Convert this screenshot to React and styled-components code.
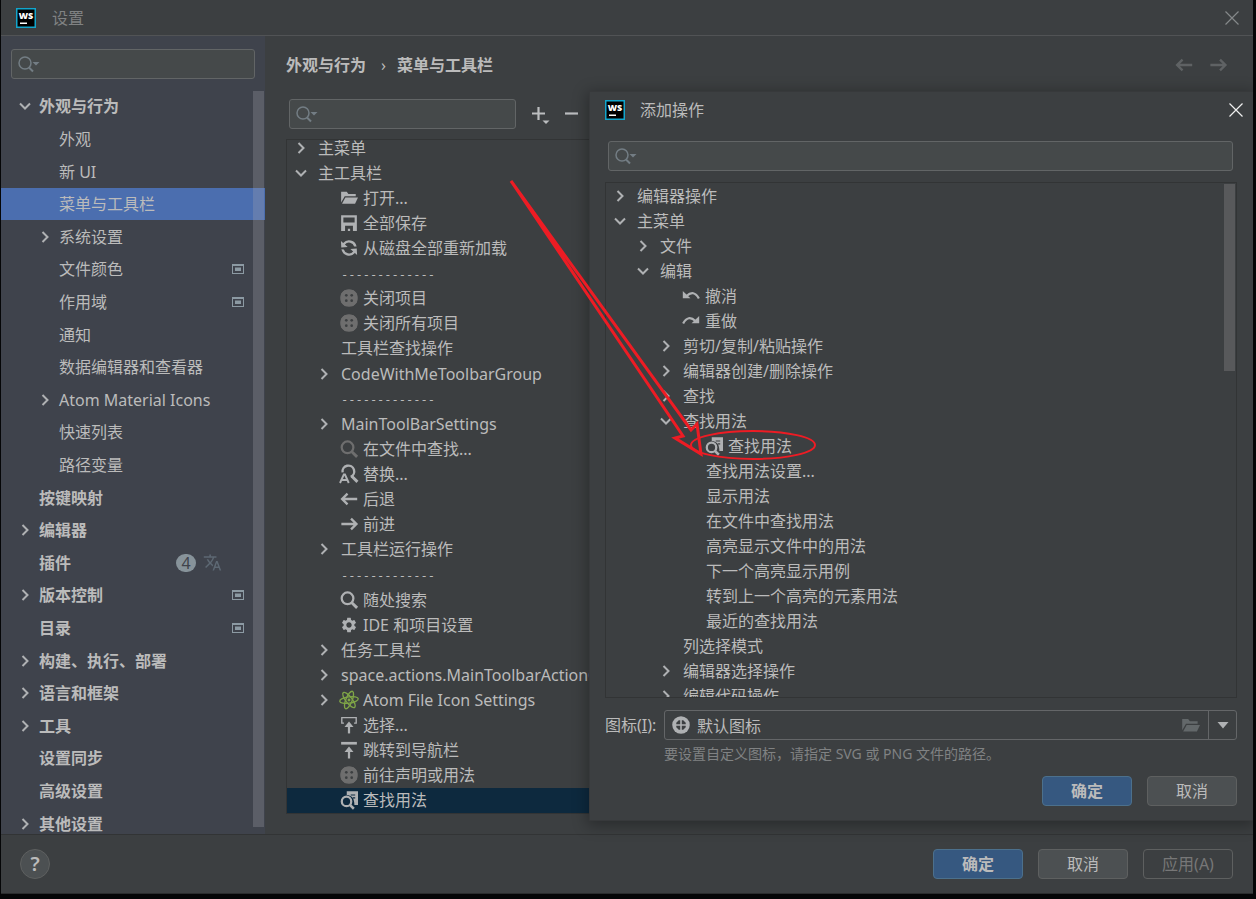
import styled, { createGlobalStyle } from 'styled-components';
import { MdSettings, MdTranslate } from 'react-icons/md';

const categories = [
    { label: '外观与行为', bold: true, arrow: 'down' },
    { label: '外观', level: 1 },
    { label: '新 UI', level: 1 },
    { label: '菜单与工具栏', level: 1, selected: true },
    { label: '系统设置', level: 1, arrow: 'right' },
    { label: '文件颜色', level: 1, project: true },
    { label: '作用域', level: 1, project: true },
    { label: '通知', level: 1 },
    { label: '数据编辑器和查看器', level: 1 },
    { label: 'Atom Material Icons', level: 1, arrow: 'right' },
    { label: '快速列表', level: 1 },
    { label: '路径变量', level: 1 },
    { label: '按键映射', bold: true },
    { label: '编辑器', bold: true, arrow: 'right' },
    { label: '插件', bold: true, updates: 4 },
    { label: '版本控制', bold: true, arrow: 'right', project: true },
    { label: '目录', bold: true, project: true },
    { label: '构建、执行、部署', bold: true, arrow: 'right' },
    { label: '语言和框架', bold: true, arrow: 'right' },
    { label: '工具', bold: true, arrow: 'right' },
    { label: '设置同步', bold: true },
    { label: '高级设置', bold: true },
    { label: '其他设置', bold: true, arrow: 'right' },
];

const separator = { label: '-------------', level: 1, separator: true };

const toolbarTree = [
    { label: '主菜单', arrow: 'right' },
    { label: '主工具栏', arrow: 'down' },
    { label: '打开...', level: 1, icon: 'open' },
    { label: '全部保存', level: 1, icon: 'save' },
    { label: '从磁盘全部重新加载', level: 1, icon: 'refresh' },
    separator,
    { label: '关闭项目', level: 1, icon: 'blank' },
    { label: '关闭所有项目', level: 1, icon: 'blank' },
    { label: '工具栏查找操作', level: 1 },
    { label: 'CodeWithMeToolbarGroup', level: 1, arrow: 'right' },
    separator,
    { label: 'MainToolBarSettings', level: 1, arrow: 'right' },
    { label: '在文件中查找...', level: 1, icon: 'findDim' },
    { label: '替换...', level: 1, icon: 'replace' },
    { label: '后退', level: 1, icon: 'back' },
    { label: '前进', level: 1, icon: 'forward' },
    { label: '工具栏运行操作', level: 1, arrow: 'right' },
    separator,
    { label: '随处搜索', level: 1, icon: 'find' },
    { label: 'IDE 和项目设置', level: 1, icon: 'gear' },
    { label: '任务工具栏', level: 1, arrow: 'right' },
    { label: 'space.actions.MainToolbarActionGroup', level: 1, arrow: 'right' },
    { label: 'Atom File Icon Settings', level: 1, arrow: 'right', icon: 'atom' },
    { label: '选择...', level: 1, icon: 'select' },
    { label: '跳转到导航栏', level: 1, icon: 'navBar' },
    { label: '前往声明或用法', level: 1, icon: 'blank' },
    { label: '查找用法', level: 1, icon: 'usages', selected: true },
];

const actionTree = [
    { label: '编辑器操作', arrow: 'right' },
    { label: '主菜单', arrow: 'down' },
    { label: '文件', level: 1, arrow: 'right' },
    { label: '编辑', level: 1, arrow: 'down' },
    { label: '撤消', level: 2, icon: 'undo' },
    { label: '重做', level: 2, icon: 'redo' },
    { label: '剪切/复制/粘贴操作', level: 2, arrow: 'right' },
    { label: '编辑器创建/删除操作', level: 2, arrow: 'right' },
    { label: '查找', level: 2, arrow: 'right' },
    { label: '查找用法', level: 2, arrow: 'down' },
    { label: '查找用法', level: 3, icon: 'usages' },
    { label: '查找用法设置...', level: 3 },
    { label: '显示用法', level: 3 },
    { label: '在文件中查找用法', level: 3 },
    { label: '高亮显示文件中的用法', level: 3 },
    { label: '下一个高亮显示用例', level: 3 },
    { label: '转到上一个高亮的元素用法', level: 3 },
    { label: '最近的查找用法', level: 3 },
    { label: '列选择模式', level: 2 },
    { label: '编辑器选择操作', level: 2, arrow: 'right' },
    { label: '编辑代码操作', level: 2, arrow: 'right' },
];

const glyphs = {
    open: (
        <g fill="currentColor">
            <path d="M1 2.5h5l1.5 2H14v2H4.2L1 12z" />
            <path d="M4.8 7.5H16l-2.6 5.5H1.8z" />
        </g>
    ),
    save: <path fill="currentColor" fillRule="evenodd" d="M1 1h14v14H1zM3 3v4.5h10V3zM4.5 10.5V15H7v-2h2v2h2.5v-4.5z" />,
    refresh: (
        <path
            fill="currentColor"
            d="M12.57 11.89A6 6 0 0 1 2.09 9.04l1.86.07a4.2 4.2 0 0 0 7.28 1.57L9.05 8.71l4.99-.26.26 4.99zM3.43 4.12a6 6 0 0 1 10.46 2.73l-1.87-.06a4.2 4.2 0 0 0-7.25-1.47l2.18 1.97-4.99.26L1.7 2.56z"
            transform="translate(-1.1 -1.1) scale(1.14)"
        />
    ),
    blank: (
        <g>
            <path fill="#6e6e6e" d="M8 .2C12.6.2 15.8 3.400 15.8 8S12.600 15.800 8 15.800.2 12.600.2 8 3.400.2 8 .2z" />
            <path fill="#6e6e6e" d="M4 1.200h8L14.800 4v8L12 14.800H4L1.200 12V4z" />
            <g fill="#3c3f41">
                <circle cx="5.600" cy="5.600" r="1.200" />
                <circle cx="10.400" cy="5.600" r="1.200" />
                <circle cx="5.600" cy="10.400" r="1.200" />
                <circle cx="10.400" cy="10.400" r="1.200" />
            </g>
        </g>
    ),
    defaultIcon: (
        <g>
            <circle cx="8" cy="8" r="7.8" fill="#afb1b3" />
            <path fill="#3c3f41" d="M7.300 7.300H3.800V6L6 3.800h1.300zM8.700 7.300V3.800H10L12.200 6v1.300zM7.300 8.700v3.500H6L3.800 10V8.700zM8.700 8.700h3.500V10L10 12.200H8.700z" />
        </g>
    ),
    find: (
        <g fill="none" stroke="currentColor">
            <circle cx="6.7" cy="6.5" r="5.2" strokeWidth="2" />
            <path d="M10.5 10.5L15.2 15" strokeWidth="2.6" />
        </g>
    ),
    findDim: (
        <g fill="none" stroke="#6e6e6e">
            <circle cx="6.7" cy="6.5" r="5.2" strokeWidth="2" />
            <path d="M10.5 10.5L15.2 15" strokeWidth="2.6" />
        </g>
    ),
    replace: (
        <g fill="none" stroke="currentColor" strokeWidth="2.1">
            <path d="M2.3 6.5A5.200 5.200 0 1 1 9.500 10.500" />
            <path d="M10.5 10L15.5 15" strokeWidth="2.6" />
            <path d="M0 16L3.400 8.500h1L7.800 16M1.800 13.400h4.500" strokeWidth="1.7" />
        </g>
    ),
    back: <path fill="none" stroke="currentColor" strokeWidth="2.1" d="M15.3 8H2M6.7 3.2L1.9 8l4.800 4.800" />,
    forward: <path fill="none" stroke="currentColor" strokeWidth="2.1" d="M1.200 8H14.500M9.8 3.2L14.6 8l-4.800 4.800" />,
    atom: (
        <g fill="none" stroke="#7fa547" strokeWidth="1.2">
            <ellipse cx="8" cy="8" rx="8.3" ry="2.8" transform="rotate(-8 8 8)" />
            <ellipse cx="8" cy="8" rx="8.3" ry="2.8" transform="rotate(52 8 8)" />
            <ellipse cx="8" cy="8" rx="8.3" ry="2.8" transform="rotate(112 8 8)" />
            <circle cx="8" cy="8" r=".7" fill="#7fa547" />
        </g>
    ),
    select: (
        <g fill="none" stroke="currentColor">
            <path d="M3.5 6.300H1.600V1.500h12.800V6.300H12.500" strokeWidth="1.200" />
            <path d="M8 15.500V8" strokeWidth="2" />
            <path d="M8 4.800L12 9.800H4z" fill="currentColor" stroke="none" />
        </g>
    ),
    navBar: (
        <g fill="currentColor">
            <path d="M1 .8h14v2.400H1z" />
            <path d="M8 4.800l4 5H9v5.700H7V9.800H4z" />
        </g>
    ),
    usages: (
        <g fill="none" stroke="currentColor">
            <path fill="currentColor" stroke="none" fillRule="evenodd" d="M6 .3h10v12.200h-3.200C12.800 7 11 4 6 3.600zM9.500 3h4v1h-4zM11.500 5.600h2v1h-2z" />
            <circle cx="5.800" cy="9.300" r="4.200" strokeWidth="2" />
            <path d="M8.800 12.300l3.500 3.500" strokeWidth="2.300" />
        </g>
    ),
    undo: (
        <g>
            <path fill="none" stroke="currentColor" strokeWidth="2" d="M4 8Q10.500 2 15 10.200" />
            <path fill="currentColor" d="M.7 3.500V10h6.800z" />
        </g>
    ),
    redo: (
        <g>
            <path fill="none" stroke="currentColor" strokeWidth="2" d="M12 8Q5.500 2 1 10.200" />
            <path fill="currentColor" d="M15.300 3.500V10H8.500z" />
        </g>
    ),
};

const Icon = ({ name, size = 18 }) => {
    if (name === 'gear') {
        return <MdSettings size={size} />;
    }
    return (
        <svg width={size} height={size} viewBox="0 0 16 16" aria-hidden="true" overflow="visible">
            {glyphs[name]}
        </svg>
    );
};

const Arrow = ({ direction }) => (
    <svg width="16" height="16" viewBox="0 0 16 16" aria-hidden="true">
        {direction && (
            <path
                fill="none"
                stroke="#afb1b3"
                strokeWidth="2"
                d={direction === 'down' ? 'M3 5.5L8 10.5l5-5' : 'M5.5 3L10.5 8l-5 5'}
            />
        )}
    </svg>
);

const Logo = () => (
    <svg width="20" height="20" viewBox="0 0 20 20" aria-hidden="true">
        <rect x=".75" y=".75" width="18.5" height="18.5" fill="#000" stroke="#12a5cc" strokeWidth="1.5" />
        <text x="10" y="10.5" fill="#fff" fontFamily="Open Sans, sans-serif" fontSize="9" fontWeight="800" textAnchor="middle">WS</text>
        <rect x="4" y="14.5" width="7" height="1.5" fill="#fff" />
    </svg>
);

const CloseGlyph = () => (
    <svg width="14" height="14" viewBox="0 0 14 14" aria-hidden="true">
        <path d="M.5 .5l13 13M13.5 .5l-13 13" stroke="currentColor" strokeWidth="1.2" />
    </svg>
);

const Search = ({ label }) => (
    <SearchBox>
        <svg width="22" height="18" viewBox="0 0 22 18" aria-hidden="true">
            <circle cx="7" cy="8" r="6" fill="none" stroke="#737d84" strokeWidth="1.5" />
            <path d="M11 12.5l4 4" stroke="#737d84" strokeWidth="2" />
            <path d="M14.5 7h7L18 10.5z" fill="#737d84" />
        </svg>
        <input type="text" aria-label={label} />
    </SearchBox>
);

const Tree = ({ items, stretch }) => (
    <TreeList $stretch={stretch}>
        {items.map((item, index) => (
            <TreeRow key={index} $level={item.level || 0} $selected={item.selected} $stretch={stretch}>
                <Arrow direction={item.arrow} />
                {item.icon && <IconSlot><Icon name={item.icon} /></IconSlot>}
                <TreeLabel $separator={item.separator}>{item.label}</TreeLabel>
            </TreeRow>
        ))}
    </TreeList>
);

const Sidebar = () => (
    <SidebarPanel>
        <SidebarSearch>
            <Search label="搜索设置" />
        </SidebarSearch>
        <CategoryArea>
            <CategoryList>
                {categories.map(item => (
                    <CategoryRow key={item.label} $level={item.level || 0} $bold={item.bold} $selected={item.selected}>
                        <Arrow direction={item.arrow} />
                        <CategoryName>{item.label}</CategoryName>
                        {item.updates && (
                            <Updates>
                                <Badge>{item.updates}</Badge>
                                <MdTranslate size={19} />
                            </Updates>
                        )}
                        {item.project && (
                            <svg width="12" height="10" viewBox="0 0 12 10" aria-hidden="true">
                                <path fill="#8c9aa3" fillRule="evenodd" d="M0 0h12v10H0zM1 2v7h10V2z" />
                                <path fill="#8c9aa3" d="M3 3.5h6v3.5H3z" />
                            </svg>
                        )}
                    </CategoryRow>
                ))}
            </CategoryList>
            <SidebarScrollbar />
        </CategoryArea>
    </SidebarPanel>
);

const AddActionDialog = () => (
    <Dialog role="dialog" aria-label="添加操作">
        <DialogTitle>
            <Logo />
            <span>添加操作</span>
            <IconButton aria-label="关闭" $color="#f0f0f0"><CloseGlyph /></IconButton>
        </DialogTitle>
        <DialogSearch>
            <Search label="搜索操作" />
        </DialogSearch>
        <DialogTree>
            <Tree items={actionTree} />
            <DialogScrollbar />
        </DialogTree>
        <IconField>
            <label htmlFor="icon-path">图标(<u>I</u>):</label>
            <Combo>
                <Icon name="defaultIcon" />
                <input id="icon-path" type="text" defaultValue="默认图标" />
                <IconButton aria-label="浏览" $color="#63686a"><Icon name="open" size={19} /></IconButton>
                <ComboToggle aria-label="展开">
                    <svg width="12" height="8" viewBox="0 0 12 8" aria-hidden="true">
                        <path d="M.5 1h11L6 7.5z" fill="#afb1b3" />
                    </svg>
                </ComboToggle>
            </Combo>
        </IconField>
        <Hint>要设置自定义图标，请指定 SVG 或 PNG 文件的路径。</Hint>
        <DialogButtons>
            <Button $primary>确定</Button>
            <Button>取消</Button>
        </DialogButtons>
    </Dialog>
);

const App = () => {
    return (
        <>
            <GlobalStyle />
            <Window>
                <TitleBar>
                    <Logo />
                    <span>设置</span>
                    <IconButton aria-label="关闭" $color="#85888a"><CloseGlyph /></IconButton>
                </TitleBar>
                <Content>
                    <Sidebar />
                    <MainPanel>
                        <Breadcrumb>
                            <b>外观与行为</b>
                            <i>›</i>
                            <b>菜单与工具栏</b>
                            <History>
                                <IconButton aria-label="后退" $color="#5f6264"><Icon name="back" /></IconButton>
                                <IconButton aria-label="前进" $color="#5f6264"><Icon name="forward" /></IconButton>
                            </History>
                        </Breadcrumb>
                        <Toolbar>
                            <ToolbarSearch>
                                <Search label="搜索菜单" />
                            </ToolbarSearch>
                            <IconButton aria-label="添加" $color="#bbbdbf">
                                <svg width="20" height="20" viewBox="0 0 20 20" aria-hidden="true">
                                    <path d="M8.5 3v13M2 9.5h13" stroke="currentColor" strokeWidth="2.2" />
                                    <path d="M12.5 16.500h7L16 20z" fill="currentColor" />
                                </svg>
                            </IconButton>
                            <IconButton aria-label="移除" $color="#bbbdbf">
                                <svg width="20" height="20" viewBox="0 0 20 20" aria-hidden="true">
                                    <path d="M3 9.5h13" stroke="currentColor" strokeWidth="2.2" />
                                </svg>
                            </IconButton>
                        </Toolbar>
                        <MainTree>
                            <Tree items={toolbarTree} stretch />
                        </MainTree>
                    </MainPanel>
                </Content>
                <Footer>
                    <Help aria-label="帮助">?</Help>
                    <Button $primary>确定</Button>
                    <Button>取消</Button>
                    <Button disabled>应用(A)</Button>
                </Footer>
                <AddActionDialog />
            </Window>
            <Annotation aria-hidden="true">
                <path d="M511 181L691 430L697 424L701 454L675 438L683 436Z" strokeWidth="3" />
                <ellipse cx="753" cy="445" rx="62" ry="14" strokeWidth="2" />
            </Annotation>
        </>
    );
}

const GlobalStyle = createGlobalStyle`
    * {
        box-sizing: border-box;
    }

    body {
        margin: 0;
        background: #050607;
        color: #bbbbbb;
        font-family: "Noto Sans", "Noto Sans CJK SC", sans-serif;
        font-size: 16px;
        line-height: 24px;
        overflow: hidden;
    }

    button, input {
        font: inherit;
        color: inherit;
    }

    svg {
        flex: none;
        display: block;
    }
`

const Window = styled.main`
    position: relative;
    display: flex;
    flex-direction: column;
    height: calc(100vh - 5px);
    margin: 0 3px 0 1px;
    background: #3c3f41;
    border-bottom: 1px solid #2b2d2e;
`

const IconButton = styled.button`
    display: flex;
    align-items: center;
    justify-content: center;
    flex: none;
    padding: 0;
    border: 0;
    background: none;
    color: ${props => props.$color};
`

const TitleBar = styled.header`
    display: flex;
    align-items: center;
    height: 36px;
    flex: none;
    padding: 0 14px 0 15px;
    border-bottom: 1px solid #515355;
    color: #808283;

    span {
        flex: 1;
        padding-left: 16px;
    }
`

const Content = styled.div`
    display: flex;
    flex: 1;
    min-height: 0;
`

const SearchBox = styled.div`
    display: flex;
    align-items: center;
    flex: 1;
    min-width: 0;
    height: 30px;
    padding-left: 6px;
    border: 1px solid #626566;
    border-radius: 3px;
    background: #45494a;

    input {
        flex: 1;
        min-width: 0;
        height: 26px;
        border: 0;
        outline: 0;
        background: none;
    }
`

const SidebarPanel = styled.nav`
    display: flex;
    flex-direction: column;
    flex: none;
    width: 264px;
    background: #3f434c;
`

const SidebarSearch = styled.div`
    display: flex;
    flex: none;
    height: 54px;
    padding: 13px 10px 0;
`

const CategoryArea = styled.div`
    position: relative;
    flex: 1;
    min-height: 0;
    overflow: hidden;
`

const CategoryList = styled.ul`
    display: flex;
    flex-direction: column;
    height: calc(100% + 6px);
    margin: 0;
    padding: 0;
    list-style: none;
`

const CategoryRow = styled.li`
    display: flex;
    align-items: center;
    flex: 1;
    gap: 6px;
    padding: 0 21px 0 ${props => 16 + props.$level * 20}px;
    font-weight: ${props => props.$bold ? 700 : 400};
    background: ${props => props.$selected ? '#4b6eaf' : 'none'};
`

const CategoryName = styled.span`
    flex: 1;
    white-space: nowrap;
`

const Updates = styled.span`
    display: flex;
    align-items: center;
    gap: 7px;
    margin-right: 22px;
    color: #5d6873;
`

const Badge = styled.span`
    width: 20px;
    height: 18px;
    border-radius: 9px;
    background: #87939a;
    color: #3f434c;
    font-weight: 400;
    line-height: 18px;
    text-align: center;
`

const SidebarScrollbar = styled.div`
    position: absolute;
    top: 1px;
    right: 1px;
    bottom: 7px;
    width: 11px;
    background: rgba(166, 166, 176, 0.28);
`

const MainPanel = styled.section`
    display: flex;
    flex-direction: column;
    flex: 1;
    min-width: 0;
    padding: 0 16px 20px 21px;
`

const Breadcrumb = styled.div`
    display: flex;
    align-items: center;
    height: 58px;
    flex: none;

    i {
        width: 31px;
        padding-left: 4px;
        font-style: normal;
        text-align: center;
    }
`

const History = styled.div`
    display: flex;
    gap: 16px;
    margin-left: auto;
    padding-right: 10px;
`

const Toolbar = styled.div`
    display: flex;
    align-items: center;
    gap: 12px;
    height: 45px;
    flex: none;
    padding: 0 0 5px 3px;
`

const ToolbarSearch = styled.div`
    display: flex;
    width: 227px;
    margin-right: 2px;
`

const MainTree = styled.div`
    flex: 1;
    min-height: 0;
    overflow: hidden;
    border: 1px solid #323435;
`

const TreeList = styled.ul`
    display: flex;
    flex-direction: column;
    height: ${props => props.$stretch ? 'calc(100% + 5px)' : 'auto'};
    margin: ${props => props.$stretch ? '-5px' : '0'} 0 0;
    padding: 0;
    list-style: none;
`

const TreeRow = styled.li`
    display: flex;
    align-items: center;
    flex: ${props => props.$stretch ? '1' : '0 0 25px'};
    min-height: 0;
    padding-left: ${props => 6 + props.$level * 23}px;
    background: ${props => props.$selected ? '#0d293e' : 'none'};
`

const IconSlot = styled.span`
    flex: none;
    width: 23px;
    margin-left: 8px;
    color: #afb1b3;

    & + span {
        padding-left: 0;
    }
`

const TreeLabel = styled.span`
    padding-left: 9px;
    white-space: nowrap;
    ${props => props.$separator && 'padding-top: 3px; font: 12px "DejaVu Sans Mono", monospace;'}
`

const Footer = styled.footer`
    display: flex;
    align-items: center;
    gap: 15px;
    flex: none;
    height: 59px;
    padding: 0 20px 0 19px;
    border-top: 1px solid #323435;
`

const Help = styled.button`
    width: 30px;
    height: 30px;
    margin-right: auto;
    padding: 0;
    border: 1px solid #5e6060;
    border-radius: 50%;
    background: #4c5052;
    font-size: 20px;
    font-weight: 600;
    line-height: 26px;
`

const Button = styled.button`
    width: 90px;
    height: 30px;
    padding: 0;
    border: 1px solid ${props => props.$primary ? '#4c708c' : '#5e6060'};
    border-radius: 4px;
    background: ${props => props.$primary ? '#365880' : '#4c5052'};
    font-weight: ${props => props.$primary ? 700 : 400};
    line-height: 26px;

    &:disabled {
        background: none;
        color: #777777;
    }
`

const Dialog = styled.section`
    position: absolute;
    top: 91px;
    right: 0;
    bottom: 72px;
    left: 588px;
    display: flex;
    flex-direction: column;
    padding: 0 16px 14px 15px;
    border: 1px solid #37393b;
    border-right: 0;
    background: #3c3f41;
    box-shadow: 0 3px 14px 2px rgba(0, 0, 0, 0.3);
`

const DialogTitle = styled.header`
    display: flex;
    align-items: center;
    flex: none;
    height: 35px;

    span {
        flex: 1;
        padding-left: 15px;
    }

    button {
        margin-right: -6px;
    }
`

const DialogSearch = styled.div`
    display: flex;
    flex: none;
    padding: 14px 4px 11px 3px;
`

const DialogTree = styled.div`
    position: relative;
    flex: 1;
    min-height: 0;
    overflow: hidden;
    border: 1px solid #323435;
`

const DialogScrollbar = styled.div`
    position: absolute;
    top: 1px;
    right: 1px;
    width: 11px;
    height: 187px;
    background: #58595b;
`

const IconField = styled.div`
    display: flex;
    align-items: center;
    flex: none;
    margin-top: 12px;

    label {
        width: 59px;
        white-space: nowrap;
    }
`

const Combo = styled.div`
    display: flex;
    align-items: center;
    flex: 1;
    height: 30px;
    padding-left: 7px;
    border: 1px solid #646668;
    border-radius: 3px;

    input {
        flex: 1;
        min-width: 0;
        height: 26px;
        padding: 0 7px;
        border: 0;
        outline: 0;
        background: none;
    }
`

const ComboToggle = styled.button`
    display: flex;
    align-items: center;
    justify-content: center;
    width: 28px;
    height: 28px;
    margin-left: 8px;
    padding: 0;
    border: 0;
    border-left: 1px solid #646668;
    background: none;
`

const Hint = styled.p`
    margin: 4px 0 12px 59px;
    color: #808283;
    font-size: 14px;
    line-height: 20px;
`

const DialogButtons = styled.div`
    display: flex;
    justify-content: flex-end;
    gap: 15px;
`

const Annotation = styled.svg`
    position: absolute;
    top: 0;
    left: 0;
    width: 100%;
    height: 100%;
    fill: none;
    stroke: #ed1c24;
    pointer-events: none;
`

export default App;
